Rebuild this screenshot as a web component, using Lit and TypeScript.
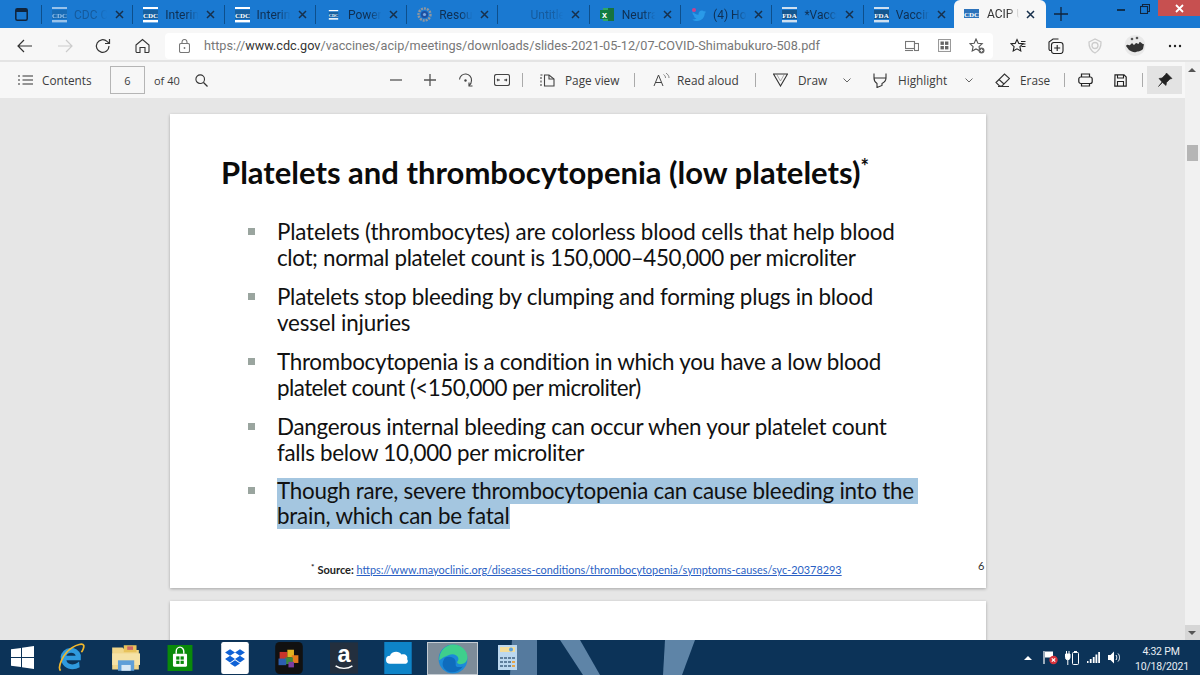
import { LitElement, html, css, svg } from "lit";
import { customElement } from "lit/decorators.js";

const cdc = (cls = "") => html`<svg class="fav ${cls}" width="15" height="16" viewBox="0 0 15 16"><rect x="0" y="0" width="15" height="2" fill="#fff"/><rect x="0" y="13" width="15" height="2.4" fill="#fff"/><rect x="0" y="3" width="15" height="9" fill="#17609f"/><text x="7.5" y="10.5" text-anchor="middle" class="favtxt">CDC</text></svg>`;
const fda = html`<svg class="fav" width="15" height="16" viewBox="0 0 15 16"><rect x="0" y="0" width="15" height="2" fill="#cfe0f0"/><rect x="0" y="13" width="15" height="2.4" fill="#cfe0f0"/><rect x="0" y="3" width="15" height="9" fill="#15568f"/><text x="7.5" y="10.5" text-anchor="middle" class="favtxt">FDA</text></svg>`;
const gear = html`<svg class="fav" width="15" height="15" viewBox="0 0 15 15"><circle cx="7.5" cy="7.5" r="6" fill="none" stroke="#8f97a0" stroke-width="2.4" stroke-dasharray="2 1"/><circle cx="7.5" cy="7.5" r="3.6" fill="#1d4fa0"/><circle cx="7.5" cy="7.5" r="1.6" fill="#7aa8e0"/></svg>`;
const excel = html`<svg class="fav" width="15" height="15" viewBox="0 0 15 15"><rect x="3" y="1" width="11" height="13" fill="#2fa866"/><rect x="8" y="1" width="6" height="13" fill="#17733f"/><rect x="0" y="3" width="9" height="9" fill="#107c41"/><text x="4.5" y="10.5" text-anchor="middle" class="favx">x</text></svg>`;
const bird = html`<svg class="fav" width="15" height="14" viewBox="0 0 15 14"><path d="M1 3c2 2.6 4 3.6 6.5 3.7C7.2 4 9 2.4 10.8 2.4c1 0 1.7.4 2.2 1l1.8-.6-1 1.700 1.200-.3c-.3.6-.8 1-1.300 1.400 0 4-3 7.400-7.400 7.400-2 0-3.700-.5-5-1.500 1.600.1 3-.3 4.200-1.200-1.300-.1-2.300-.9-2.700-2l1.200-.1C2.500 7.600 1.500 6.300 1.600 5l1.200.3C1.500 4.600 .8 3.500 1 3Z" fill="#2a9ae8"/><circle cx="3" cy="2" r="2" fill="#c9418f"/></svg>`;

const tabs = [
  { icon: cdc("dim"), label: "CDC C", dim: true },
  { icon: cdc(), label: "Interim" },
  { icon: cdc(), label: "Interim" },
  { icon: cdc("small"), label: "Poweri" },
  { icon: gear, label: "Resour" },
  { icon: html`<span class="fav blank"></span>`, label: "Untitle", dim: true },
  { icon: excel, label: "Neutra" },
  { icon: bird, label: "(4) Hor" },
  { icon: fda, label: "*Vaccin" },
  { icon: fda, label: "Vaccin" },
];

const ic = (w: number, h: number, body: unknown, cls = "") => html`<svg class="ic ${cls}" width="${w}" height="${h}" viewBox="0 0 ${w} ${h}" fill="none" stroke="#333" stroke-width="1.1">${body}</svg>`;

type Line = [string, number];
const items: Line[][] = [
  [["Platelets (thrombocytes) are colorless blood cells that help blood", -0.18], ["clot; normal platelet count is 150,000–450,000 per microliter", -0.35]],
  [["Platelets stop bleeding by clumping and forming plugs in blood", -0.26], ["vessel injuries", -0.18]],
  [["Thrombocytopenia is a condition in which you have a low blood", -0.29], ["platelet count (<150,000 per microliter)", -0.55]],
  [["Dangerous internal bleeding can occur when your platelet count", -0.26], ["falls below 10,000 per microliter", -0.3]],
];

@customElement("app-root")
export class AppRoot extends LitElement {
  static styles = css`
    :host { display: block; width: 1200px; height: 675px; overflow: hidden; position: relative; font-family: "Open Sans", "Noto Sans", sans-serif; color: #333; background: #e6e6e6; }
    * { box-sizing: border-box; }
    .shell { display: flex; flex-direction: column; height: 675px; }
    svg { display: block; flex: none; }
    .tabbar { height: 28px; background: #1a79d1; display: flex; flex: none; align-items: stretch; }
    .winicon { width: 41px; display: flex; align-items: center; padding-left: 15px; }
    .tab { width: 91.3px; flex: none; display: flex; align-items: center; padding-left: 10px; border-left: 1px solid #0d4f8c; margin: 5px 0 4px; position: relative; color: #0f2f52; }
    .fav { flex: none; display: block; width: 15px; }
    .fav.blank { height: 15px; }
    .fav.dim { opacity: .55; }
    .fav.small { height: 10px; }
    .favtxt { font: 700 7px "Liberation Serif", serif; fill: #fff; }
    .favx { font: 700 9px "Liberation Sans", sans-serif; fill: #fff; }
    .tlabel { margin-left: 7px; width: 38px; flex: none; white-space: nowrap; font: 400 12px/16px Roboto, sans-serif; -webkit-mask-image: linear-gradient(90deg, #000 55%, transparent 88%); mask-image: linear-gradient(90deg, #000 55%, transparent 88%); }
    .tab.dimmed .tlabel { color: #14508a; opacity: .75; }
    .close { margin-left: 1px; flex: none; }
    .active { width: 92px; flex: none; background: #f7f7f7; border-radius: 6px 6px 0 0; display: flex; align-items: center; padding-left: 10px; color: #333; }
    .active .tlabel { margin-left: 8px; width: 37px; }
    .active .close { margin-left: 0; }
    .newtab { width: 40px; display: flex; align-items: center; justify-content: center; padding-right: 9px; }
    .winbtns { margin-left: auto; display: flex; align-items: flex-start; }
    .wb { width: 24px; height: 17px; display: flex; align-items: center; justify-content: center; }
    .wx { width: 42px; height: 16px; background: #c75050; display: flex; align-items: center; justify-content: center; margin-left: 1px; }
    .addr { height: 34px; flex: none; background: #f7f7f7; display: flex; align-items: center; padding-top: 3px; border-bottom: 2px solid #e4e4e4; }
    .navs { display: flex; width: 165px; flex: none; align-items: center; }
    .nb { display: flex; justify-content: center; flex: none; }
    .urlbox { width: 828px; height: 26px; background: #fff; border-radius: 4px; display: flex; align-items: center; padding-left: 14px; flex: none; }
    .urltxt { margin-left: 14px; font: 400 12.7px/16px Roboto, sans-serif; color: #777; white-space: nowrap; flex: none; width: 600px; }
    .urltxt b { font-weight: 400; color: #333; }
    .urlend { display: flex; align-items: center; margin-left: auto; }
    .tools { display: flex; align-items: center; flex: 1; }
    .pdfbar { height: 36px; flex: none; background: #f7f7f7; display: flex; align-items: center; font-size: 11.8px; color: #3c3c3c; box-shadow: 0 1px 0 #d9d9d9; white-space: nowrap; position: relative; }
    .cell { flex: none; display: flex; align-items: center; }
    .pageinput { width: 35px; height: 28px; border: 1px solid #b5b5b5; background: #f7f7f7; display: flex; align-items: center; justify-content: center; font-size: 11px; flex: none; }
    .sep { width: 1px; height: 14px; background: #aaa; flex: none; }
    .pin { width: 35px; height: 28px; background: #e3e3e3; display: flex; align-items: center; justify-content: center; flex: none; }
    .view { flex: 1; min-height: 0; position: relative; overflow: hidden; background: #e6e6e6; display: flex; flex-direction: column; align-items: flex-start; padding: 16px 0 0 170px; gap: 13px; }
    .page { width: 816px; background: #fff; box-shadow: 0 1px 3px rgba(0,0,0,.28); flex: none; position: relative; }
    .slide { height: 474px; padding: 40px 0 0 51px; font-family: Lato, "Liberation Sans", sans-serif; color: #111; }
    .next { height: 60px; }
    h1 { margin: 0; font: 700 31px/36px Lato, sans-serif; color: #0b0b0b; white-space: nowrap; }
    h1 sup { font-size: 20px; line-height: 0; vertical-align: 10px; }
    ul { margin: 29px 0 0 26px; padding: 0; list-style: none; display: flex; flex-direction: column; gap: 13px; }
    li { position: relative; padding-left: 81px; margin-left: -51px; font-size: 22.4px; line-height: 26px; white-space: nowrap; }
    li::before { content: ""; position: absolute; left: 52px; top: 9px; width: 7px; height: 7px; background: #9aa59f; }
    .sel { margin-top: -1px; }
    .line { display: block; width: fit-content; }
    .sel .line { background: #a4c6e0; letter-spacing: -.26px; }
    .sel .line:first-child { padding-right: 4px; }
    .sel .line:last-child { margin-top: -1px; letter-spacing: -.2px; }
    .foot { position: absolute; left: 141px; top: 449px; font: 700 11px/14px Lato, sans-serif; color: #222; white-space: nowrap; }
    .foot sup { font-size: 8px; line-height: 0; vertical-align: 4px; margin-right: 3px; }
    .foot a { color: #2a5fc4; text-decoration: underline; font: 400 10.9px/14px Lato, sans-serif; }
    .pno { position: absolute; left: 808px; top: 445px; font: 400 11px/14px Lato, sans-serif; color: #333; }
    .scroll { position: absolute; right: 0; top: 62px; bottom: 35px; width: 15px; background: #f1f1f1; }
    .thumb { position: absolute; left: 2px; top: 83px; width: 11px; height: 16px; background: #b5b5b5; }
    .sup { position: absolute; left: 3px; top: 6px; width: 0; height: 0; border: 4px solid transparent; border-top: 0; border-bottom: 4px solid #555; }
    .sdn { position: absolute; left: 0; bottom: 0; width: 15px; height: 15px; background: #d6d6d6; }
    .sdn::after { content: ""; position: absolute; left: 3px; top: 6px; border: 4px solid transparent; border-bottom: 0; border-top: 4px solid #555; }
    .taskbar { height: 35px; flex: none; background: #0c3358; position: relative; display: flex; align-items: center; overflow: hidden; }
    .streak { position: absolute; inset: 0; }
    .tk { position: relative; width: 54.5px; height: 35px; display: flex; align-items: center; justify-content: center; flex: none; }
    .tk.first { width: 44px; }
    .tk.on { background: #7d8c99; border: 1px solid #c4ccd3; width: 51px; height: 33px; margin: 2px 1.75px 0; }
    .tray { position: relative; margin-left: auto; display: flex; align-items: center; height: 35px; }
    .clock { width: 52px; text-align: center; color: #e8eef4; font: 400 10.5px/15px Roboto, sans-serif; letter-spacing: -.2px; margin-left: 14px; padding-top: 2px; white-space: nowrap; }
  `;

  private x() {
    return svg`<path d="M3 3l7 7M10 3l-7 7" stroke="#17304c" stroke-width="1.5"/>`;
  }

  private w(n: number, body: unknown = "", cls = "") {
    return html`<div class="cell ${cls}" style="width:${n}px">${body}</div>`;
  }

  render() {
    return html`<div class="shell">
      <div class="tabbar">
        <div class="winicon">${ic(13, 13, svg`<rect x=".8" y=".8" width="11.4" height="11.4" rx="1.5" stroke="#10243c" stroke-width="1.5"/><rect x="1" y="1" width="11" height="3" fill="#10243c" stroke="none"/>`)}</div>
        ${tabs.map((t) => html`<div class="tab ${t.dim ? "dimmed" : ""}">${t.icon}<span class="tlabel">${t.label}</span><svg class="close" width="13" height="13" viewBox="0 0 13 13" fill="none">${this.x()}</svg></div>`)}
        <div class="active">
          <svg class="fav" width="15" height="16" viewBox="0 0 15 16"><rect x="0" y="3" width="15" height="9" fill="#2d73bb"/><text x="7.5" y="10.5" text-anchor="middle" class="favtxt">CDC</text></svg>
          <span class="tlabel">ACIP U</span>
          <svg class="close" width="13" height="13" viewBox="0 0 13 13" fill="none">${this.x()}</svg>
        </div>
        <div class="newtab">${ic(14, 14, svg`<path d="M7 0v14M0 7h14" stroke="#10243c" stroke-width="1.3"/>`)}</div>
        <div class="winbtns">
          <div class="wb">${ic(8, 8, svg`<path d="M0 5h8" stroke="#0e3050" stroke-width="2"/>`)}</div>
          <div class="wb">${ic(10, 10, svg`<rect x=".5" y="2.5" width="7" height="7" stroke="#10243c"/><path d="M2.5 2.5V.5h7v7H7.5" stroke="#10243c"/>`)}</div>
          <div class="wx">${ic(9, 9, svg`<path d="M1 1l7 7M8 1L1 8" stroke="#fff" stroke-width="1.8"/>`)}</div>
        </div>
      </div>

      <div class="addr">
        <div class="navs">
          <div class="nb" style="width:49px">${ic(16, 14, svg`<path d="M15 7H1M7 1L1 7l6 6" stroke="#333" stroke-width="1.2"/>`)}</div>
          <div class="nb" style="width:31px">${ic(16, 14, svg`<path d="M1 7h14M9 1l6 6-6 6" stroke="#ccc" stroke-width="1.2"/>`)}</div>
          <div class="nb" style="width:45px">${ic(16, 16, svg`<path d="M14 8a6.3 6.3 0 1 1-2-4.6L14.5 5.5M14.5 1v4.500H10" stroke="#333" stroke-width="1.2"/>`)}</div>
          <div class="nb" style="width:35px">${ic(15, 15, svg`<path d="M1 7l6.5-5.5L14 7v6.500a1 1 0 0 1-1 1h-3V9.500H5v5H2a1 1 0 0 1-1-1Z" stroke="#333" stroke-width="1.1"/>`)}</div>
        </div>
        <div class="urlbox">
          ${ic(11, 14, svg`<rect x=".5" y="4.5" width="10" height="9" rx="1.5" stroke="#777"/><path d="M3 4.500V3a2.500 2.500 0 0 1 5 0v1.500" stroke="#777"/><circle cx="5.5" cy="9" r=".9" fill="#777" stroke="none"/>`)}
          <span class="urltxt">https://<b>www.cdc.gov</b>/vaccines/acip/meetings/downloads/slides-2021-05-12/07-COVID-Shimabukuro-508.pdf</span>
          <div class="urlend">
            <div class="nb" style="width:33px">${ic(14, 12, svg`<rect x=".5" y="1.5" width="9" height="7" stroke="#777"/><path d="M0 10.500h8" stroke="#777"/><rect x="9.5" y="3.5" width="4" height="7" fill="#fff" stroke="#777"/>`)}</div>
            <div class="nb" style="width:32px">${ic(13, 13, svg`<rect x=".5" y=".5" width="12" height="12" stroke="#999"/><g fill="#666" stroke="none"><rect x="2.5" y="2.5" width="3.4" height="3.4"/><rect x="7" y="2.5" width="3.4" height="3.4"/><rect x="2.5" y="7" width="3.4" height="3.4"/><rect x="7" y="7" width="3.4" height="3.4"/></g>`)}</div>
            <div class="nb" style="width:33px">${ic(16, 16, svg`<path d="M7 1l1.900 4.200 4.300.4-3.200 3 .9 4.400L7 10.900 3.200 13l.9-4.400-3.200-3 4.300-.4Z" stroke="#555"/><circle cx="12.5" cy="12.5" r="3" fill="#666" stroke="none"/><path d="M11 12.500h3M12.500 11v3" stroke="#fff" stroke-width=".8"/>`)}</div>
          </div>
        </div>
        <div class="tools">
          <div class="nb" style="width:50px">${ic(16, 15, svg`<path d="M7 1.500l1.800 3.900 4.200.4-3.100 2.900.9 4.200L7 10.800 3.200 13l.9-4.300L1 5.800l4.200-.4Z" stroke="#222" stroke-width="1.1"/><path d="M11 3.500h4.500M12 6h3.500M11.500 8.500h4" stroke="#222"/>`)}</div>
          <div class="nb" style="width:26px">${ic(16, 16, svg`<path d="M3.500 12.500H2.500a1.500 1.500 0 0 1-1.500-1.500V4l4-3h5.500" stroke="#222"/><rect x="3.5" y="4.5" width="11.5" height="11" rx="2.5" stroke="#222"/><path d="M9.200 7v6M6.200 10h6" stroke="#222"/>`)}</div>
          <div class="nb" style="width:52px">${ic(16, 16, svg`<path d="M2 4l6-3 6 3c.2 4.500-1.500 8.500-6 11C4 13 1.800 8.500 2 4Z" stroke="#ccc" stroke-width="1.3"/><circle cx="8" cy="7.5" r="3" stroke="#ccc" stroke-width="1.3"/>`)}</div>
          <div class="nb" style="width:28px"><svg width="24" height="21" viewBox="0 0 24 21"><circle cx="12" cy="10.5" r="10.5" fill="#e9e9e9"/><path d="M3 11c2-3 3 1 5-2s2 3 4 0 3 2 4-1 3 2 5 1l-1 5c-3 3-5 2-7 3s-5-1-7-2Z" fill="#333"/><circle cx="9" cy="4" r="1.3" fill="#555"/><circle cx="14" cy="3" r="1.3" fill="#555"/></svg></div>
          <div class="nb" style="width:51px">${ic(14, 4, svg`<g fill="#222" stroke="none"><circle cx="2" cy="2" r="1.2"/><circle cx="7" cy="2" r="1.2"/><circle cx="12" cy="2" r="1.2"/></g>`)}</div>
        </div>
      </div>

      <div class="pdfbar">
        <div class="cell" style="width:42px;padding-left:18px">${ic(15, 10, svg`<path d="M4.500 1h10.500M4.500 5h10.500M4.500 9h10.500M0 1h2M0 5h2M0 9h2" stroke="#333"/>`)}</div>
        ${this.w(68, "Contents")}
        <div class="pageinput">6</div>
        <div class="cell" style="width:50px;padding-left:9px;font-size:11px">of 40</div>
        ${this.w(195, ic(13, 13, svg`<circle cx="5.2" cy="5.2" r="4.3" stroke="#333" stroke-width="1.1"/><path d="M8.500 8.500l4 4" stroke="#333" stroke-width="1.2"/>`))}
        ${this.w(34, ic(12, 4, svg`<path d="M0 2h12" stroke="#555" stroke-width="1.3"/>`))}
        ${this.w(34, ic(12, 12, svg`<path d="M0 6h12M6 0v12" stroke="#555" stroke-width="1.3"/>`))}
        ${this.w(36, ic(15, 15, svg`<path d="M1.500 6.500a6 6 0 0 1 12 1 6 6 0 0 1-2.500 5" stroke="#444"/><path d="M11 9.500v3.500h3.500" stroke="#444"/><circle cx="7.5" cy="7.5" r="1.2" fill="#444" stroke="none"/>`))}
        ${this.w(28, ic(16, 12, svg`<rect x=".5" y=".5" width="15" height="11" rx="2" stroke="#444"/><path d="M3 6h3M3 6l1.200-1.200M3 6l1.200 1.200M13 6h-3M13 6l-1.200-1.200M13 6l-1.200 1.200" stroke="#444"/>`))}
        <div class="sep"></div>
        ${this.w(17)}
        ${this.w(25, ic(15, 13, svg`<path d="M4.500 1H9l5 4v7H4.500Z" stroke="#444"/><path d="M9 1v4h5" stroke="#444"/><path d="M2.500 1H1v11h1.500" stroke="#444" stroke-dasharray="2 1.500"/>`))}
        ${this.w(69, "Page view")}
        <div class="sep"></div>
        ${this.w(18)}
        ${this.w(24, ic(17, 14, svg`<path d="M1 13L5.500 2 10 13M2.500 9.500h6" stroke="#444" stroke-width="1"/><path d="M10.500 1.500c1.500 1 2 2 2 3.500M13 0c2 1.500 3 3 3 5" stroke="#777" stroke-width=".9"/>`))}
        ${this.w(78, "Read aloud")}
        <div class="sep"></div>
        ${this.w(17)}
        ${this.w(25, ic(15, 14, svg`<path d="M.5 1h14L7.500 13Z" stroke="#333" stroke-width="1.1"/><path d="M3.500 1l4 7 4-7" stroke="#777" stroke-width=".6"/>`))}
        ${this.w(45, "Draw")}
        ${this.w(30, ic(8, 5, svg`<path d="M.5.500L4 4 7.500.5" stroke="#555" stroke-width=".9"/>`))}
        ${this.w(25, ic(14, 15, svg`<path d="M1 .5v4.500h12V.5M1 5c0 3 1.500 4.500 3 5.500V14.500l5-2v-2c2-1 4-2.500 4-5.500" stroke="#333" stroke-width="1.1"/>`))}
        ${this.w(67, "Highlight")}
        ${this.w(30, ic(8, 5, svg`<path d="M.5.500L4 4 7.500.5" stroke="#555" stroke-width=".9"/>`))}
        ${this.w(25, ic(15, 14, svg`<path d="M1 9.500L9.500 1l5 4.500-7.500 7.500H4.500Z" stroke="#333"/><path d="M4 6.500l5 4.500M3 13.500h11" stroke="#333"/>`))}
        ${this.w(44, "Erase")}
        <div class="sep"></div>
        ${this.w(13)}
        ${this.w(36, ic(15, 14, svg`<rect x=".8" y="4" width="13.4" height="6.5" rx="2" stroke="#222" stroke-width="1.2"/><path d="M3.500 4V1h8v3M3.500 10.500V13h8v-2.500" stroke="#222" stroke-width="1.2"/>`))}
        ${this.w(28, ic(13, 13, svg`<path d="M1 .8h9l2.200 2.200v9.200H.8Z" stroke="#222" stroke-width="1.2"/><path d="M3.500 1v3h6V1M3.500 12V7.500h6V12" stroke="#222"/>`))}
        <div class="sep" style="margin-right:4px"></div>
        <div class="pin">${ic(16, 16, svg`<path d="M9.500 1l5.500 5.500-2 .5-3.500 3.500-.5 3L5.500 10.500 1.500 14.500 5 10 2 6.500l3-.5L8.500 2.500Z" fill="#222" stroke="#222" stroke-width=".6"/>`)}</div>
      </div>

      <div class="view">
        <div class="page slide">
          <h1>Platelets and thrombocytopenia (low platelets)<sup>*</sup></h1>
          <ul>
            ${items.map((l) => html`<li>${l.map((p) => html`<span class="line" style="letter-spacing:${p[1]}px">${p[0]}</span>`)}</li>`)}
            <li class="sel"><span class="line">Though rare, severe thrombocytopenia can cause bleeding into the</span><span class="line">brain, which can be fatal</span></li>
          </ul>
          <div class="foot"><sup>*</sup>Source: <a>https://www.mayoclinic.org/diseases-conditions/thrombocytopenia/symptoms-causes/syc-20378293</a></div>
          <div class="pno">6</div>
        </div>
        <div class="page next"></div>
      </div>

      <div class="taskbar">
        <svg class="streak" width="1200" height="35" viewBox="0 0 1200 35"><g fill="#6d93b5"><path d="M512 0h25v35h-27Z" opacity=".75"/><path d="M560 0h20l20 35h-17Z" opacity=".85"/><path d="M665 0h30l-13 35h-19Z" opacity=".85"/></g></svg>
        <div class="tk first">
          <svg width="23" height="23" viewBox="0 0 23 23"><path d="M0 3.300l10-1.400V11H0ZM11 1.700L23 0v11H11ZM0 12h10v9.100L0 19.700ZM11 12h12v11l-12-1.700Z" fill="#fff"/></svg>
        </div>
        <div class="tk">
          <svg width="28" height="30" viewBox="0 0 24 26"><path d="M3 12a9 9 0 0 1 17.500-1.500V15H8c.5 4 7 5 11 1l.5 5c-6 3.500-16 2-16.500-9Z" fill="#2f9ade"/><path d="M8 11h8c-.5-3.500-7-3.500-8 0Z" fill="#0c3358"/><path d="M3 24C0 21 5 9 13 4c4-2.500 9-4 10-2 .5 1.500-1 5-2 6" fill="none" stroke="#f2b82c" stroke-width="1.5"/></svg>
        </div>
        <div class="tk">
          <svg width="29" height="28" viewBox="0 0 25 24"><path d="M1 3h9l2 2h12v17H1Z" fill="#f0d68a"/><rect x="11" y="1" width="11" height="6" fill="#e8c35c"/><rect x="14" y="2" width="5" height="3" fill="#c66"/><rect x="1" y="8" width="24" height="10" fill="#f5e2a6"/><rect x="6" y="14" width="14" height="9" fill="#5f9fd8"/><rect x="9" y="18" width="8" height="5" fill="#d9e9f5"/></svg>
        </div>
        <div class="tk">
          <svg width="26" height="26" viewBox="0 0 23 24"><rect width="23" height="24" fill="#0a8a0a"/><path d="M8 8V6a3.500 4 0 0 1 7 0v2" fill="none" stroke="#fff" stroke-width="1.3"/><rect x="5" y="8" width="13" height="12" rx="1" fill="#fff"/><g fill="#0a8a0a"><rect x="8" y="10.500" width="3" height="3"/><rect x="12" y="10.500" width="3" height="3"/><rect x="8" y="14.500" width="3" height="3"/><rect x="12" y="14.500" width="3" height="3"/></g></svg>
        </div>
        <div class="tk">
          <svg width="28" height="32" viewBox="0 0 25 29"><rect width="25" height="29" rx="2" fill="#fff"/><path d="M8 6.500l4.500 3-4.500 3-4.500-3ZM17 6.500l4.500 3-4.500 3-4.500-3ZM8 12.500l4.500 3-4.500 3-4.500-3ZM17 12.500l4.500 3-4.500 3-4.500-3ZM12.500 16.500l4.500 3-4.500 3-4.500-3Z" fill="#0f62d6"/></svg>
        </div>
        <div class="tk">
          <svg width="28" height="32" viewBox="0 0 25 29"><rect width="25" height="29" rx="4" fill="#111"/><path d="M4 9h7v7H4Z" fill="#c8342c"/><path d="M11 7h6v7h-6Z" fill="#e3b421"/><path d="M15 12h6v7h-6Z" fill="#e57a1c"/><path d="M9 14h7v6H9Z" fill="#3c8a3c"/><path d="M3 15h7v6H3Z" fill="#2d5fb0"/><path d="M12 18h5v5h-5Z" fill="#7b3ea0"/></svg>
        </div>
        <div class="tk">
          <svg width="28" height="32" viewBox="0 0 25 28"><rect width="25" height="28" fill="#232f3e"/><text x="12.5" y="18" text-anchor="middle" style="font:700 21px 'Liberation Sans',sans-serif" fill="#fff">a</text><path d="M5 21c4 3 11 3 15 0" fill="none" stroke="#fff" stroke-width="1.3"/></svg>
        </div>
        <div class="tk">
          <svg width="28" height="32" viewBox="0 0 24 28"><rect width="24" height="28" fill="#0e84c8"/><path d="M5 19a3.500 3.500 0 0 1 0-7c1-4 8-5 10-1 3-1 6 1 5 4 1.500 2 0 4-2 4Z" fill="#fff"/></svg>
        </div>
        <div class="tk on">
          <svg width="30" height="30" viewBox="0 0 26 26"><circle cx="13" cy="13" r="12.5" fill="#1c8ad8"/><path d="M1 14C1 6 7 .5 13 .5c7 0 12.500 5 12.500 11 0 4-3 6-6 6-2 0-3-1-3-2 1-1 1.500-2 1-3.500-1-3-5-4-8-2.500C5 11 3 13 1 14Z" fill="#3fcf8c"/><path d="M6 12c3-2 8-1 9 2s-1 6 3 6c1 0 3 0 4-1-3 4-7 6-11 5.500-5-1-7-5-7-7 0-2 1-4 2-5.500Z" fill="#0f6cbd"/></svg>
        </div>
        <div class="tk">
          <svg width="19" height="25" viewBox="0 0 19 25"><rect width="19" height="25" fill="#bcd8ef"/><rect x="2" y="2" width="15" height="5" fill="#f2dc9a"/><circle cx="13" cy="4.5" r="2" fill="#5aa0dc"/><g fill="#5f7f9c"><rect x="2" y="12" width="3" height="2"/><rect x="6" y="12" width="3" height="2"/><rect x="10" y="12" width="3" height="2"/><rect x="14" y="12" width="3" height="2"/><rect x="2" y="16" width="3" height="2"/><rect x="6" y="16" width="3" height="2"/><rect x="10" y="16" width="3" height="2"/><rect x="14" y="16" width="3" height="2" fill="#e3a44a"/><rect x="2" y="20" width="3" height="2"/><rect x="6" y="20" width="3" height="2"/><rect x="10" y="20" width="3" height="2"/><rect x="14" y="20" width="3" height="2" fill="#e3a44a"/></g></svg>
        </div>
        <div class="tray">
          <svg width="8" height="4" viewBox="0 0 8 4"><path d="M0 4L4 0l4 4Z" fill="#fff"/></svg>
          <svg style="margin-left:11px" width="15" height="15" viewBox="0 0 15 15"><path d="M1 1v13" stroke="#fff" stroke-width="1.2"/><path d="M2 1.500h8v6H2Z" fill="#fff"/><circle cx="10.5" cy="10" r="4.2" fill="#d8323c"/><path d="M8.800 8.300l3.400 3.400M12.200 8.300l-3.400 3.400" stroke="#fff" stroke-width="1.2"/></svg>
          <svg style="margin-left:7px" width="14" height="14" viewBox="0 0 14 14"><path d="M1.500 0v3M4 0v3" stroke="#fff"/><path d="M.5 3h4.500v3.500a2.200 2.200 0 0 1-4.500 0ZM2.800 8.500V14" fill="#fff" stroke="#fff"/><rect x="7.5" y="1.5" width="6" height="12" rx="1" fill="none" stroke="#fff"/><rect x="9" y="0" width="3" height="1.5" fill="#fff"/></svg>
          <svg style="margin-left:8px" width="13" height="11" viewBox="0 0 13 11"><g fill="#fff"><rect x="0" y="9" width="1.5" height="2"/><rect x="2.8" y="7" width="1.8" height="4"/><rect x="5.8" y="5" width="1.8" height="6"/><rect x="8.5" y="2.5" width="1.8" height="8.5"/><rect x="11.2" y="0" width="1.8" height="11"/></g></svg>
          <svg style="margin-left:8px" width="13" height="13" viewBox="0 0 13 13"><path d="M0 4h2.500L6 .5v12L2.500 9H0Z" fill="#fff"/><path d="M8 4c1 1.500 1 3.500 0 5M10 2.500c2 2 2 6 0 8" stroke="#fff" fill="none"/></svg>
          <div class="clock">4:32 PM<br />10/18/2021</div>
          <div style="width:13px"></div>
        </div>
      </div>
      <div class="scroll"><div class="sup"></div><div class="thumb"></div><div class="sdn"></div></div>
    </div>`;
  }
}
